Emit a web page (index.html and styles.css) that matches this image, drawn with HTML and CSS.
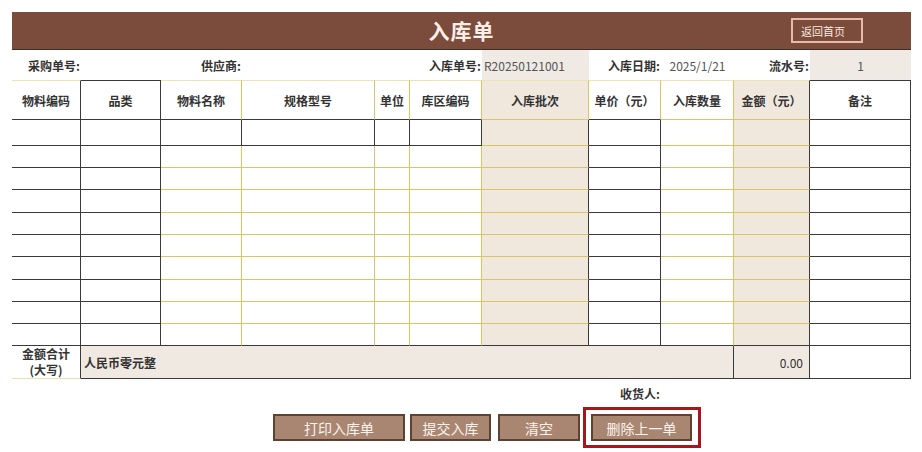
FILE: index.html
```html
<!DOCTYPE html>
<html lang="zh-CN">
<head>
    <meta charset="UTF-8">
    <meta name="viewport" content="width=device-width, initial-scale=1.0">
    <title>入库单</title>
    <link rel="stylesheet" href="styles.css">
</head>
<body>
<div class="page">
    <div class="title-bar">
        <h1>入库单</h1>
        <button class="home-btn" type="button">返回首页</button>
    </div>

    <table class="sheet">
        <colgroup>
            <col class="c-code">
            <col class="c-type">
            <col class="c-name">
            <col class="c-spec">
            <col class="c-unit">
            <col class="c-area">
            <col class="c-batch">
            <col class="c-price">
            <col class="c-qty">
            <col class="c-amount">
            <col class="c-note">
        </colgroup>

        <!-- order info -->
        <tr class="info">
            <td class="label">采购单号:</td>
            <td></td>
            <td class="label">供应商:</td>
            <td></td>
            <td></td>
            <td class="label">入库单号:</td>
            <td class="value shaded">R20250121001</td>
            <td class="label">入库日期:</td>
            <td class="value center">2025/1/21</td>
            <td class="label">流水号:</td>
            <td class="value center shaded">1</td>
        </tr>

        <!-- column titles -->
        <tr class="head">
            <td>物料编码</td>
            <td>品类</td>
            <td>物料名称</td>
            <td>规格型号</td>
            <td>单位</td>
            <td>库区编码</td>
            <td>入库批次</td>
            <td>单价（元）</td>
            <td>入库数量</td>
            <td>金额（元）</td>
            <td>备注</td>
        </tr>

        <!-- item lines -->
        <tr class="row first"><td></td><td></td><td></td><td></td><td></td><td></td><td></td><td></td><td></td><td></td><td></td></tr>
        <tr class="row"><td></td><td></td><td></td><td></td><td></td><td></td><td></td><td></td><td></td><td></td><td></td></tr>
        <tr class="row"><td></td><td></td><td></td><td></td><td></td><td></td><td></td><td></td><td></td><td></td><td></td></tr>
        <tr class="row tall"><td></td><td></td><td></td><td></td><td></td><td></td><td></td><td></td><td></td><td></td><td></td></tr>
        <tr class="row"><td></td><td></td><td></td><td></td><td></td><td></td><td></td><td></td><td></td><td></td><td></td></tr>
        <tr class="row"><td></td><td></td><td></td><td></td><td></td><td></td><td></td><td></td><td></td><td></td><td></td></tr>
        <tr class="row tall"><td></td><td></td><td></td><td></td><td></td><td></td><td></td><td></td><td></td><td></td><td></td></tr>
        <tr class="row"><td></td><td></td><td></td><td></td><td></td><td></td><td></td><td></td><td></td><td></td><td></td></tr>
        <tr class="row"><td></td><td></td><td></td><td></td><td></td><td></td><td></td><td></td><td></td><td></td><td></td></tr>
        <tr class="row last"><td></td><td></td><td></td><td></td><td></td><td></td><td></td><td></td><td></td><td></td><td></td></tr>

        <!-- totals -->
        <tr class="total">
            <td class="total-label">金额合计<br>(大写)</td>
            <td class="total-words" colspan="8">人民币零元整</td>
            <td class="total-sum">0.00</td>
            <td class="total-note"></td>
        </tr>

        <tr class="sign">
            <td colspan="7"></td>
            <td class="label">收货人:</td>
            <td colspan="3"></td>
        </tr>
    </table>

    <div class="actions">
        <button class="act act-print" type="button">打印入库单</button>
        <button class="act act-submit" type="button">提交入库</button>
        <button class="act act-clear" type="button">清空</button>
        <div class="focus">
            <button class="act act-undo" type="button">删除上一单</button>
        </div>
    </div>
</div>
</body>
</html>
```

FILE: styles.css
```css
body {
    margin: 0;
    font-family: "Noto Sans CJK SC", "Liberation Sans", sans-serif;
    color: #333;
    background: #fff;
}
.page {
    padding: 12px 11px 0 12px;
}

/* header bar */
.title-bar {
    display: grid;
    grid-template-columns: 1fr auto 1fr;
    align-items: center;
    height: 37px;
    background: #7b4b3b;
    border-bottom: 1px solid #3b2f2a;
}
.title-bar h1 {
    grid-column: 2;
    margin: 0;
    font-size: 21px;
    font-weight: 700;
    line-height: 1;
    letter-spacing: 1px;
    color: #fcefe7;
}
.home-btn {
    justify-self: end;
    margin-right: 48px;
    width: 72px;
    height: 25px;
    padding: 0 0 0 8px;
    text-align: left;
    font-family: inherit;
    font-size: 11px;
    color: #fbe9df;
    background: transparent;
    border: 2px solid #e6b9a8;
    cursor: pointer;
}

/* sheet */
.sheet {
    width: 899px;
    table-layout: fixed;
    border-collapse: separate;
    border-spacing: 0;
    font-size: 12px;
}
.sheet td {
    padding: 0;
}
.c-code { width: 69px; }
.c-type { width: 80px; }
.c-name { width: 81px; }
.c-spec { width: 133px; }
.c-unit { width: 35px; }
.c-area { width: 72px; }
.c-batch { width: 107px; }
.c-price { width: 72px; }
.c-qty { width: 73px; }
.c-amount { width: 76px; }
.c-note { width: 101px; }

.label {
    font-weight: 700;
    text-align: right;
    padding-right: 1px !important;
    white-space: nowrap;
}
.value {
    color: #555;
    padding-left: 2px !important;
}
.center {
    text-align: center;
    padding-left: 0 !important;
}
.shaded {
    background: #efeae4;
}

.info {
    height: 30px;
}

/* column titles */
.head {
    height: 40px;
}
.head td {
    text-align: center;
    font-weight: 700;
    border-top: 1px solid #efe2b4;
    border-right: 1px solid #d9c466;
    border-bottom: 1px solid #3a3a3a;
}
.head td:nth-child(1),
.head td:nth-child(2),
.head td:nth-child(10),
.head td:nth-child(11) {
    border-right-color: #3a3a3a;
}
.head td:nth-child(2),
.head td:nth-child(11) {
    border-top-color: #3a3a3a;
}
.head td:nth-child(7),
.head td:nth-child(9),
.head td:nth-child(10) {
    border-bottom-color: #d9c466;
}
.head td:nth-child(7),
.head td:nth-child(10) {
    background: #f0e7dd;
}

/* item lines */
.row {
    height: 22px;
}
.row.first {
    height: 26px;
}
.row.tall {
    height: 23px;
}
.row td {
    border-right: 1px solid #d9c466;
    border-bottom: 1px solid #d9c466;
}
.row td:nth-child(1),
.row td:nth-child(2),
.row td:nth-child(8),
.row td:nth-child(11),
.row.first td:nth-child(-n+6) {
    border-color: #3a3a3a;
}
.row td:nth-child(7),
.row td:nth-child(10) {
    border-right-color: #3a3a3a;
    background: #f0e7dd;
}
.row.last td {
    border-bottom-color: #3a3a3a;
}

/* totals */
.total {
    height: 33px;
}
.total td {
    border-right: 1px solid #3a3a3a;
    border-bottom: 1px solid #3a3a3a;
}
.total-label {
    text-align: center;
    font-weight: 700;
    line-height: 16px;
    border-bottom-color: #eddfae !important;
}
.total-words {
    padding-left: 3px !important;
    font-weight: 700;
    background: #f0e9e1;
}
.total-sum {
    text-align: right;
    padding-right: 6px !important;
    background: #f0e9e1;
}

.sign {
    height: 28px;
}

/* buttons */
.actions {
    display: flex;
    align-items: center;
    padding-left: 261px;
}
.act {
    height: 27px;
    padding: 0;
    font-family: inherit;
    font-size: 14px;
    color: #fbf2eb;
    background: #a98672;
    border: 2px solid #5d4231;
    cursor: pointer;
}
.act-print {
    width: 132px;
}
.act-submit {
    width: 81px;
    margin-left: 5px;
}
.act-clear {
    width: 82px;
    margin-left: 7px;
}
.act-undo {
    width: 101px;
}
.focus {
    margin-left: 3px;
    padding: 4px 6px 4px 5px;
    border: 3px solid #a3181d;
}
```
